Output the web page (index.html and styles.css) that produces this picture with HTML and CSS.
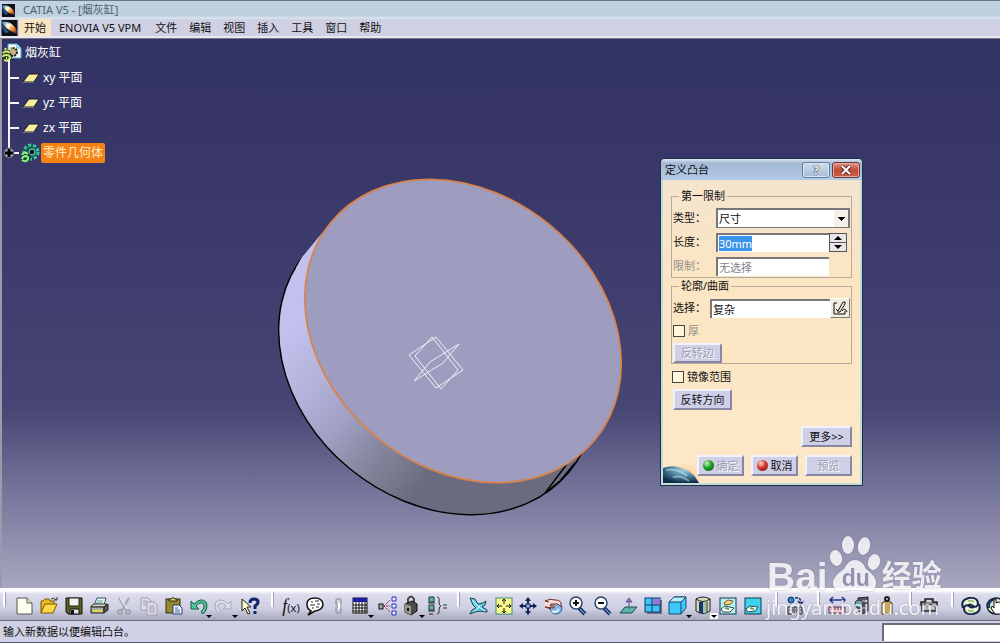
FILE: index.html
```html
<!DOCTYPE html>
<html lang="zh-CN">
<head>
    <meta charset="UTF-8">
    <meta name="viewport" content="width=device-width, initial-scale=1.0">
    <title>CATIA V5 - [烟灰缸]</title>
    <link rel="stylesheet" href="styles.css">
    <script defer src="script.js"></script>
</head>
<body>
    <!-- shared symbols -->
    <svg class="symbols" width="0" height="0" aria-hidden="true">
      <defs>
        <linearGradient id="comet" x1="0" y1="0" x2="1" y2="1">
          <stop offset="0" stop-color="#1b7fc0"/>
          <stop offset=".4" stop-color="#ffe9b8"/>
          <stop offset=".65" stop-color="#f08a3c"/>
          <stop offset="1" stop-color="#3a1a10"/>
        </linearGradient>
        <linearGradient id="side" x1="279" y1="250" x2="520" y2="470" gradientUnits="userSpaceOnUse">
          <stop offset=".19" stop-color="#c2c1ee"/>
          <stop offset=".36" stop-color="#b2b2da"/>
          <stop offset=".5" stop-color="#a0a0c4"/>
          <stop offset=".64" stop-color="#86869e"/>
          <stop offset=".81" stop-color="#6b6b80"/>
        </linearGradient>
        <radialGradient id="planetFill" cx=".6" cy=".2" r=".8">
          <stop offset="0" stop-color="#a8d0dc"/>
          <stop offset=".5" stop-color="#4c84a4"/>
          <stop offset="1" stop-color="#102c44"/>
        </radialGradient>
        <radialGradient id="glow" cx=".5" cy=".8" r=".5">
          <stop offset="0" stop-color="#f8a83c"/>
          <stop offset="1" stop-color="#fce6c4" stop-opacity="0"/>
        </radialGradient>
      </defs>
      <symbol id="logo" viewBox="0 0 16 16">
        <rect width="16" height="16" fill="#10101c"/>
        <path d="M0 2 Q8 0 14 8 L16 14 L11 12 Q4 9 0 2Z" fill="url(#comet)"/>
        <path d="M0 3 Q3 9 8 12 L4 13 Q1 10 0 3Z" fill="#1c5f9c"/>
        <path d="M4 3 L9 5 L7 9Z" fill="#fff"/>
      </symbol>
      <symbol id="plane" viewBox="0 0 18 10">
        <path d="M1 9 L7 1 H17 L12 9Z" fill="#f6ee9a" stroke="#17172c" stroke-width="1"/>
        <path d="M0 10 H12" stroke="#9fb0a0"/>
      </symbol>
      <symbol id="drop" viewBox="0 0 6 3"><path d="M0 0H6L3 3Z" fill="#000"/></symbol>
    </svg>

    <header class="titlebar">
      <svg class="logo-small"><use href="#logo"/></svg>
      <h1>CATIA V5 - [烟灰缸]</h1>
    </header>

    <nav class="menubar">
      <svg class="logo-menu"><use href="#logo"/></svg>
      <button type="button" class="active">开始</button>
      <button type="button" class="wide">ENOVIA V5 VPM</button>
      <button type="button">文件</button>
      <button type="button">编辑</button>
      <button type="button">视图</button>
      <button type="button">插入</button>
      <button type="button">工具</button>
      <button type="button">窗口</button>
      <button type="button">帮助</button>
    </nav>

    <main class="viewer">
      <svg class="model" viewBox="0 38 1000 550" preserveAspectRatio="xMinYMin meet">
        <!-- base disc, side wall, top face -->
        <path d="M305 254 A171 137 39.4 0 0 569 472 A171 137 39.4 0 0 305 254Z" fill="url(#side)" stroke="#000" stroke-width="1.4"/>
        <path d="M323 232 L302 257 L296 268 L330 300 L350 220Z" fill="url(#side)"/>
        <path d="M567 464 L545 493 L536 480 L550 460Z" fill="#6b6b80"/>
        <path d="M567 464 L545 493 M575 463 L560 481 L545 493" fill="none" stroke="#000" stroke-width="1.3"/>
        <ellipse cx="463" cy="331" rx="171" ry="137" transform="rotate(39.4 463 331)" fill="#9e9dc0" stroke="#d9824a" stroke-width="1.8"/>
        <g fill="none" stroke="#f0f0f4" stroke-width="1">
          <path d="M409 355 L436 337 L463 370 L436 388Z"/>
          <path d="M432 337 L458 370 L441 389 L415 356Z"/>
          <path d="M414 381 L430 362 L459 344 L443 363Z"/>
        </g>
      </svg>

      <div class="tree">
        <div class="tree-root">
          <svg width="20" height="20" viewBox="0 0 20 20">
            <path d="M6 1 H15 L19 5 V15 H6Z" fill="#fff" stroke="#4ab0c8"/>
            <path d="M15 1V5H19" fill="#bfe8f0" stroke="#4ab0c8"/>
            <circle cx="11" cy="9" r="4" fill="#c9b48c" stroke="#20201c" stroke-width="2" stroke-dasharray="2 1"/>
            <circle cx="5" cy="13" r="5" fill="#23421c"/>
            <path d="M1 10 Q4 7 8 10 M1 14 Q1 12 4 12 Q8 12 8 15 Q6 19 2 17 M4 15 H5 M3 7 L4 5 M7 7 L9 5" fill="none" stroke="#cfee70" stroke-width="2"/>
          </svg>
          <span>烟灰缸</span>
        </div>
        <ul>
          <li><svg width="18" height="10"><use href="#plane"/></svg><span>xy 平面</span></li>
          <li><svg width="18" height="10"><use href="#plane"/></svg><span>yz 平面</span></li>
          <li><svg width="18" height="10"><use href="#plane"/></svg><span>zx 平面</span></li>
          <li class="body-node">
            <svg class="expander" width="12" height="12" viewBox="0 0 12 12"><circle cx="6" cy="6" r="5" fill="#b4b4c4" stroke="#55556c"/><path d="M2 6H10M6 2V10" stroke="#000" stroke-width="3"/></svg>
            <svg width="20" height="20" viewBox="0 0 20 20">
              <circle cx="11" cy="9" r="7" fill="#1b5b50" stroke="#35c8a0" stroke-width="3" stroke-dasharray="3 2"/>
              <circle cx="12" cy="9" r="3" fill="#0b1c28" stroke="#7ee8d0"/>
              <circle cx="6" cy="14" r="5" fill="#17482c"/>
              <path d="M2 12 Q4 8 8 11 M2 16 Q3 13 6 13 Q9 14 8 16 Q6 20 2 17" fill="none" stroke="#92f088" stroke-width="2"/>
            </svg>
            <span class="selected">零件几何体</span>
          </li>
        </ul>
      </div>

      <section class="dialog" aria-labelledby="dialogTitle">
        <header>
          <h2 id="dialogTitle">定义凸台</h2>
          <button type="button" class="win help" aria-label="Help">?</button>
          <button type="button" class="win close" aria-label="Close">
            <svg width="12" height="10" viewBox="0 0 12 10"><path d="M2 1 L10 9 M10 1 L2 9" stroke="#5b2a2a" stroke-width="4"/><path d="M2 1 L10 9 M10 1 L2 9" stroke="#fff" stroke-width="2"/></svg>
          </button>
        </header>
        <form>
          <fieldset>
            <legend>第一限制</legend>
            <div class="row">
              <label for="type">类型：</label>
              <div class="select"><select id="type"><option>尺寸</option></select></div>
            </div>
            <div class="row">
              <label for="length">长度：</label>
              <input type="text" id="length" class="mid" value="30mm">
              <div class="spin">
                <button type="button" aria-label="+"><svg width="8" height="4"><path d="M0 4H8L4 0Z"/></svg></button>
                <button type="button" aria-label="-"><svg width="8" height="4"><path d="M0 0H8L4 4Z"/></svg></button>
              </div>
            </div>
            <div class="row disabled">
              <label for="limit">限制：</label>
              <input type="text" id="limit" class="mid" value="无选择" disabled>
            </div>
          </fieldset>

          <fieldset>
            <legend>轮廓/曲面</legend>
            <div class="row profile">
              <label for="profile">选择：</label>
              <input type="text" id="profile" value="复杂">
              <button type="button" class="sketch" aria-label="草图">
                <svg width="16" height="16" viewBox="0 0 16 16" fill="none" stroke="#111"><path d="M5 3H2V14H13V11M4 9L6 11L11 2L13 2L13 4L8 12L5 12M10 11Q13 7 15 12"/></svg>
              </button>
            </div>
            <div class="check disabled"><input type="checkbox" id="thick" disabled><label for="thick">厚</label></div>
            <button type="button" class="btn side" disabled>反转边</button>
          </fieldset>

          <div class="check mirror"><input type="checkbox" id="mirror"><label for="mirror">镜像范围</label></div>
          <button type="button" class="btn reverse">反转方向</button>
          <button type="button" class="btn more">更多&gt;&gt;</button>

          <div class="actions">
            <button type="button" class="btn" disabled><i class="ball green"></i>确定</button>
            <button type="button" class="btn"><i class="ball red"></i>取消</button>
            <button type="button" class="btn" disabled>预览</button>
          </div>
        </form>
        <svg class="planet" width="42" height="32" viewBox="0 0 42 32">
          <rect width="42" height="32" fill="url(#glow)"/>
          <path d="M0 17 Q10 13 22 18 Q31 22 36 32 H0Z" fill="url(#planetFill)"/>
          <path d="M3 19 Q14 17 24 25 M10 26 Q18 24 26 30" fill="none" stroke="#cfe6ea" stroke-opacity=".5" stroke-width="2"/>
        </svg>
      </section>
    </main>

    <div class="toolbar">
      <div class="group">
        <button type="button" aria-label="新建"><svg viewBox="0 0 24 24"><path d="M5 4H15L20 9V20H5Z" fill="#fffff0" stroke="#55554c"/><path d="M15 4V9H20" fill="#e8e8d0" stroke="#55554c"/></svg></button>
        <button type="button" aria-label="打开"><svg viewBox="0 0 24 24"><path d="M4 19V7H6L8 5H12L13 7H17V10" fill="#e8b820" stroke="#7c5a00"/><path d="M4 19L8 10H20L16 19Z" fill="#fcd848" stroke="#7c5a00"/><path d="M14 5Q17 3 19 6M17 6H20V3" fill="none" stroke="#333"/></svg></button>
        <button type="button" aria-label="保存"><svg viewBox="0 0 24 24"><path d="M4 4H20V20H6L4 18Z" fill="#5c6420" stroke="#111"/><rect x="7" y="4" width="10" height="8" fill="#f4f4e8" stroke="#222"/><path d="M8 15H17V20H8Z" fill="#e4e4e4" stroke="#111"/><rect x="9" y="16" width="3" height="4" fill="#111"/></svg></button>
        <button type="button" aria-label="打印"><svg viewBox="0 0 24 24"><path d="M7 11L10 4H19L17 11" fill="#e6f6ee" stroke="#35585c"/><path d="M10 7H16M9 9H15" stroke="#63a090"/><path d="M4 12L7 10H20L17 13H4Z" fill="#d8dcd0" stroke="#333"/><path d="M4 13H17V19H4Z" fill="#acb0a4" stroke="#222"/><path d="M17 13L21 10V16L17 19Z" fill="#5c5c50" stroke="#222"/><path d="M6 17H15" stroke="#e8d848" stroke-width="2"/></svg></button>
        <button type="button" aria-label="剪切" disabled><svg viewBox="0 0 24 24" fill="none" stroke="#a4a4b0" stroke-width="2"><path d="M7 4L14 16M17 4L10 16"/><circle cx="8" cy="18" r="2"/><circle cx="16" cy="18" r="2"/><path d="M8 4L15 15" stroke="#fff" stroke-width="1"/></svg></button>
        <button type="button" aria-label="复制" disabled><svg viewBox="0 0 24 24" fill="#dedeea" stroke="#a0a0ac"><path d="M4 4H11L14 7V16H4Z"/><path d="M10 8H17L20 11V21H10Z"/><path d="M6 7H10M6 9H9M6 11H9M12 12H17M12 14H18M12 16H18M12 18H18"/></svg></button>
        <button type="button" aria-label="粘贴"><svg viewBox="0 0 24 24"><rect x="4" y="5" width="14" height="14" fill="#98882c" stroke="#35300c"/><path d="M7 7V5H9Q11 2 13 5H15V7Z" fill="#e8d86c" stroke="#222"/><path d="M11 11H17L20 14V20H11Z" fill="#f4f4ff" stroke="#223a70"/><path d="M13 14H16M13 16H18M13 18H18" stroke="#4464a0"/></svg></button>
        <button type="button" aria-label="撤消"><svg viewBox="0 0 24 24"><path d="M4 7V15H12L9 12Q15 6 17 11Q18 14 14 18L16 20Q22 14 19 8Q14 3 7 10Z" fill="#52c49c" stroke="#106044"/><use href="#drop" x="19" y="21" width="6" height="3"/></svg></button>
        <button type="button" aria-label="重做" disabled><svg viewBox="0 0 24 24"><path d="M19 7V15H11L14 12Q9 7 6 11Q5 14 9 18L7 20Q1 14 4 8Q9 3 16 10Z" fill="#dcdce8" stroke="#a8a8b4"/><use href="#drop" x="20" y="21" width="6" height="3"/></svg></button>
        <button type="button" aria-label="这是什么"><svg viewBox="0 0 24 24"><path d="M5 5L5 17L8 14L11 20L13 19L10 13H14Z" fill="#fff8c8" stroke="#222"/><path d="M13 9Q13 5 17 5Q21 5 21 8Q21 10 18 12V15M18 17V20" fill="none" stroke="#14246c" stroke-width="3"/></svg></button>
      </div>

      <div class="group tight">
        <button type="button" class="fx">f<small>(x)</small></button>
        <button type="button" aria-label="注释"><svg viewBox="0 0 24 24"><path d="M8 17L5 21L12 17Q20 16 20 10Q19 4 12 4Q4 4 4 10Q4 15 8 17Z" fill="#fff" stroke="#111" stroke-width="1.5"/><path d="M8 8H10M12 7H16M7 11H12M14 10H17M9 14H11M13 13H16" stroke="#333"/></svg></button>
        <button type="button" aria-label="链接" disabled><svg viewBox="0 0 24 24" fill="none" stroke="#a8a8b4" stroke-width="2"><rect x="9" y="5" width="5" height="6" rx="2"/><rect x="9" y="13" width="5" height="6" rx="2"/><path d="M12 9V15" stroke="#fff"/></svg></button>
        <button type="button" aria-label="设计表"><svg viewBox="0 0 24 24"><rect x="2" y="4" width="14" height="15" fill="#fff" stroke="#111"/><rect x="2" y="4" width="14" height="4" fill="#1c1ca4"/><path d="M2 11H16M2 14H16M2 17H16M5 8V19M8 8V19M11 8V19M14 8V19" stroke="#111"/><use href="#drop" x="17" y="21" width="6" height="3"/></svg></button>
        <button type="button" aria-label="关系"><svg viewBox="0 0 24 24" fill="none"><rect x="4" y="10" width="4" height="5" fill="#8cb8a8" stroke="#111"/><path d="M8 12H15M9 12L15 6M9 12L15 18" stroke="#982850" stroke-dasharray="2 1"/><path d="M17 3H21V7H17ZM17 10H21V14H17ZM17 17H21V21H17Z" fill="#e8e8ff" stroke="#2434b0"/></svg></button>
        <button type="button" aria-label="锁"><svg viewBox="0 0 24 24"><path d="M9 12V5Q12 0 15 5V12" fill="none" stroke="#444" stroke-width="2"/><path d="M6 10L13 7L18 10V17L12 21L6 18Z" fill="#4c4c4c" stroke="#111"/><path d="M6 10L12 12V21L6 18Z" fill="#96968c"/><path d="M9 14V17" stroke="#111" stroke-width="2"/><use href="#drop" x="20" y="21" width="6" height="3"/></svg></button>
        <button type="button" aria-label="等效尺寸"><svg viewBox="0 0 24 24" fill="none"><path d="M6 3H11V8H6ZM6 11H11V16H6Z" fill="#66b09c" stroke="#163c3c"/><path d="M5 9H12M5 17H12M6 20H10" stroke="#222"/><path d="M14 3Q17 3 16 8Q16 12 18 12Q16 12 16 16Q17 20 14 20" stroke="#333"/><path d="M20 11H24M20 14H24" stroke="#333"/></svg></button>
      </div>

      <div class="group">
        <button type="button" aria-label="飞行"><svg viewBox="0 0 24 24"><path d="M4 4L9 5L12 10L17 9L20 7L19 11L16 13L21 16V18L14 17L9 18L4 20L6 16L10 14L7 11L4 4Z" fill="#63cce0" stroke="#17485c"/><path d="M6 6L13 13L19 17M8 17L14 12" fill="none" stroke="#d8f8ff"/></svg></button>
        <button type="button" aria-label="全部适应"><svg viewBox="0 0 24 24"><rect x="5" y="4" width="16" height="16" fill="#fbfb8c" stroke="#3c8c74"/><path d="M13 5V10M13 14V19M6 12H11M15 12H20M11 7L13 5L15 7M11 17L13 19L15 17M8 10L6 12L8 14M18 10L20 12L18 14" fill="none" stroke="#111"/></svg></button>
        <button type="button" aria-label="平移"><svg viewBox="0 0 24 24"><path d="M12 4V20M4 12H20" stroke="#14245c" stroke-width="2"/><path d="M12 3L15 7H9ZM12 21L15 17H9ZM3 12L7 9V15ZM21 12L17 9V15Z" fill="#14245c"/><rect x="10" y="10" width="4" height="4" fill="#98c0dc" stroke="#14245c"/></svg></button>
        <button type="button" aria-label="旋转"><svg viewBox="0 0 24 24"><circle cx="15" cy="14" r="6" fill="#84b8e4" stroke="#285c98"/><path d="M4 7Q9 4 14 6Q20 6 20 10V13L17 10H10L9 12L13 12L13 14L4 13" fill="#fcdcd0" stroke="#702c28"/><path d="M4 7L8 8M4 13L10 15" stroke="#702c28"/><path d="M11 17Q15 20 18 15" fill="none" stroke="#e4f4ff" stroke-width="2"/></svg></button>
        <button type="button" aria-label="放大"><svg viewBox="0 0 24 24"><path d="M13 14L19 20" stroke="#1c3870" stroke-width="4"/><path d="M14 15L19 20" stroke="#8cc0e4" stroke-width="1"/><circle cx="10" cy="9" r="6" fill="#fff" stroke="#2c4868" stroke-width="1.5"/><path d="M7 9H13M10 6V12" stroke="#111" stroke-width="2"/></svg></button>
        <button type="button" aria-label="缩小"><svg viewBox="0 0 24 24"><path d="M13 14L19 20" stroke="#1c3870" stroke-width="4"/><path d="M14 15L19 20" stroke="#8cc0e4" stroke-width="1"/><circle cx="10" cy="9" r="6" fill="#fff" stroke="#2c4868" stroke-width="1.5"/><path d="M7 9H13" stroke="#111" stroke-width="2"/></svg></button>
        <button type="button" aria-label="法线视图"><svg viewBox="0 0 24 24"><path d="M4 19L9 13H21L16 19Z" fill="#5cb4ac" stroke="#1c4c50"/><path d="M13 15V6M10 8L13 4L16 8Z" fill="#a48cc8" stroke="#6c4c94"/></svg></button>
        <button type="button" aria-label="多视图"><svg viewBox="0 0 24 24"><rect x="6" y="6" width="15" height="14" fill="#6c6c84"/><rect x="4" y="4" width="15" height="14" fill="#3cc8f4" stroke="#14346c"/><rect x="12" y="5" width="7" height="6" fill="#9c74dc"/><path d="M11 4V18M4 11H19" stroke="#14346c"/></svg></button>
        <button type="button" aria-label="等轴测视图"><svg viewBox="0 0 24 24"><path d="M3 8L8 3H20V14L15 20H3Z" fill="#3cc8fc" stroke="#14486c"/><path d="M3 8L8 3H20L15 8Z" fill="#b4ecfc" stroke="#14486c"/><path d="M15 8V20" stroke="#14486c"/><use href="#drop" x="20" y="21" width="6" height="3"/></svg></button>
        <button type="button" aria-label="着色"><svg viewBox="0 0 24 24"><rect x="19" y="19" width="8" height="6" fill="#fff"/><path d="M5 5V17Q12 22 19 17V5Q12 1 5 5Z" fill="#d8dcb4" stroke="#222"/><path d="M8 8V19H12V8Z" fill="#1c3470"/><path d="M12 8V19H15V8Z" fill="#98c8ac"/><path d="M5 5Q12 10 19 5M16 8V18" fill="none" stroke="#222"/><use href="#drop" x="20" y="21" width="6" height="3"/></svg></button>
        <button type="button" aria-label="隐藏/显示"><svg viewBox="0 0 24 24"><rect x="4" y="4" width="16" height="16" fill="#b8f0f0" stroke="#14384c"/><path d="M8 9L12 6L17 7L15 10L9 11Z" fill="#fcdc6c" stroke="#70582c"/><path d="M5 15L9 12L18 14L14 18L7 18Z" fill="#fff" stroke="#284c50"/><path d="M9 14L13 15" stroke="#58a070" stroke-width="2"/></svg></button>
        <button type="button" aria-label="交换可视空间"><svg viewBox="0 0 24 24"><rect x="4" y="4" width="16" height="16" fill="#3cd4ec" stroke="#14384c"/><path d="M5 15L9 12L17 13L14 17L7 18Z" fill="#fff" stroke="#284c50"/><path d="M9 14L13 15" stroke="#58a070" stroke-width="2"/></svg></button>
      </div>

      <div class="group">
        <button type="button" aria-label="转换"><svg viewBox="0 0 24 24" fill="none"><circle cx="8" cy="6" r="3" fill="#2888c0" stroke="#142c60"/><path d="M12 4Q18 3 18 9M15 7L18 10L21 7" stroke="#142c60" stroke-width="1.5" stroke-dasharray="3 1"/><path d="M5 13H9V20H5ZM11 13H14V20H11ZM16 13H19V20H16ZM6 16H8M12 16H13M17 16H18" stroke="#222"/></svg></button>
      </div>
      <div class="group">
        <button type="button" aria-label="测量间距"><svg viewBox="0 0 24 24" fill="none"><path d="M5 6H20M8 3L5 6L8 9M17 3L20 6L17 9" stroke="#1c348c" stroke-width="1.5"/><path d="M4 13H20V19H4ZM7 13V16M10 13V16M13 13V16M16 13V16" fill="#f4c8d0" stroke="#5c3048"/></svg></button>
        <button type="button" aria-label="测量项"><svg viewBox="0 0 24 24"><path d="M8 4L18 3V17L12 20L8 16Z" fill="#54545c" stroke="#222"/><circle cx="9" cy="10" r="4" fill="#74a8b0" stroke="#333"/><path d="M12 7H16M12 14H16" stroke="#c8c8d0"/></svg></button>
        <button type="button" aria-label="测量惯量"><svg viewBox="0 0 24 24"><path d="M7 9Q12 5 17 9V20H7Z" fill="#c8a85c" stroke="#4c3c1c"/><path d="M9 9V19" stroke="#fbe8a8" stroke-width="2"/><circle cx="12" cy="5" r="2" fill="#ccc" stroke="#222" stroke-width="2"/></svg></button>
      </div>
      <div class="group">
        <button type="button" aria-label="工具"><svg viewBox="0 0 24 24"><path d="M4 8H8V5H16V8H20V11H4Z" fill="#8c8c98" stroke="#222" stroke-width="1.5"/><path d="M5 11V17H19V11Z" fill="#a8a8b4" stroke="#222" stroke-width="1.5"/><path d="M10 7H14M7 14H9M11 14H13M15 14H17" stroke="#eee" stroke-width="1.5"/></svg></button>
      </div>
      <div class="group">
        <button type="button" aria-label="更新"><svg viewBox="0 0 24 24"><ellipse cx="12" cy="12" rx="9" ry="8" fill="#f4f8e0"/><path d="M4 14Q1 6 10 4Q19 3 19 10Q18 14 14 12Q11 9 8 12M20 10Q23 18 14 20Q5 21 5 14Q6 10 10 12Q13 15 16 12" fill="none" stroke="#14284c" stroke-width="2"/><path d="M9 7Q13 6 15 8M15 17Q11 18 9 16" fill="none" stroke="#96c880" stroke-width="2"/></svg></button>
        <button type="button" aria-label="手动更新"><svg viewBox="0 0 24 24"><ellipse cx="12" cy="12" rx="9" ry="8" fill="#dcecc8" stroke="#14203c" stroke-width="1.5"/><path d="M5 14Q4 6 12 5" fill="none" stroke="#14386c" stroke-width="2"/><path d="M10 5V14L8 12L7 14L11 20H18V9L15 8L12 9V5Z" fill="#fff" stroke="#111"/></svg></button>
      </div>
    </div>

    <footer class="statusbar">
      <p>输入新数据以便编辑凸台。</p>
      <input type="text" aria-label="命令">
    </footer>

    <div class="watermark" aria-hidden="true">
      <div class="brand">
        <span>Bai</span>
        <div class="paw">
          <svg viewBox="0 0 54 58">
            <g fill="#fff">
              <ellipse cx="8" cy="22" rx="6" ry="8" transform="rotate(-15 8 22)"/>
              <ellipse cx="20" cy="9" rx="6" ry="9"/>
              <ellipse cx="36" cy="10" rx="6" ry="9" transform="rotate(12 36 10)"/>
              <ellipse cx="46" cy="26" rx="6" ry="8" transform="rotate(15 46 26)"/>
              <path d="M27 24 Q34 24 38 33 Q49 41 48 48 Q47 57 38 55 Q27 53 17 55 Q6 57 5 48 Q4 41 16 33 Q20 24 27 24Z"/>
            </g>
          </svg>
          <b>du</b>
        </div>
        <span class="cjk">经验</span>
      </div>
      <div class="site">jingyan.baidu.com</div>
    </div>
</body>
</html>
```
FILE: styles.css
```css
* {
    margin: 0;
    padding: 0;
    box-sizing: border-box;
}

body {
    position: relative;
    display: flex;
    flex-direction: column;
    min-height: 100vh;
    overflow: hidden;
    background-color: #d0d0e6;
    color: #111;
    font-family: "Noto Sans", "Noto Sans CJK SC", sans-serif;
    font-size: 11px;
    line-height: 14px;
}

button, input, select {
    font: inherit;
    color: inherit;
}

button {
    border: none;
    background: none;
}

svg {
    display: block;
}

.symbols {
    position: absolute;
}

/* TITLE + MENU */
.titlebar {
    display: flex;
    align-items: center;
    gap: 8px;
    height: 19px;
    padding-left: 2px;
    border-top: 1px solid #66788a;
    background: linear-gradient(#c2d2e0, #bdcfdf 80%, #dfe7ee);
    color: #50606c;
}

.titlebar h1 {
    font-size: 11px;
    font-weight: normal;
}

.logo-small {
    width: 13px;
    height: 13px;
}

.menubar {
    display: flex;
    height: 19px;
    border-bottom: 2px solid #e8e8f2;
    background-color: #d0d0e4;
}

.logo-menu {
    width: 17px;
    height: 16px;
    margin: 1px 1px 0;
}

.menubar button {
    padding: 0 6px;
}

.menubar .active {
    padding: 0 5px;
    background-color: #f9e4c2;
}

.menubar .wide {
    padding: 0 8px;
}

/* 3D VIEW */
.viewer {
    position: relative;
    flex: 1;
    min-height: 550px;
    border-left: 2px solid #9a9aac;
    border-top: 1px solid #77778c;
    background: linear-gradient(#333264, #3c3b6c 38%, #464573 67%, #74739a 82%, #a9a8c0);
}

.model {
    position: absolute;
    top: -1px;
    left: -2px;
    width: 1000px;
    height: 550px;
}

.tree {
    position: relative;
    width: 130px;
    padding-top: 1px;
    color: #fff;
    font-size: 12px;
}

.tree-root, .tree li {
    display: flex;
    align-items: center;
    gap: 3px;
    height: 25px;
}

.tree ul {
    position: relative;
    list-style: none;
    padding-left: 6px;
}

.tree ul::before {
    content: "";
    position: absolute;
    left: 6px;
    top: -5px;
    bottom: 12px;
    width: 2px;
    background-color: #f4f4fa;
}

.tree li::before {
    content: "";
    width: 11px;
    height: 2px;
    background-color: #f4f4fa;
}

.tree .expander {
    position: absolute;
    left: 1px;
}

.tree .body-node {
    gap: 1px;
}

.tree .selected {
    padding: 2px;
    border-radius: 2px;
    background-color: #f58216;
    color: #ffeec4;
    line-height: 16px;
}

/* DIALOG */
.dialog {
    position: absolute;
    top: 119px;
    left: 658px;
    width: 203px;
    border: 1px solid #1d3048;
    border-radius: 5px 5px 0 0;
    background: linear-gradient(#f4e4d0, #fbe5c2 40%, #fce8c8);
    box-shadow: inset 0 0 0 2px #c4dcdc;
}

.dialog header {
    display: flex;
    align-items: center;
    gap: 2px;
    height: 21px;
    padding: 0 2px 0 4px;
    border-radius: 4px 4px 0 0;
    background: linear-gradient(#dce8f4, #a4b8d4 20%, #b2cbe6);
}

.dialog h2 {
    flex: 1;
    font-size: 11px;
    font-weight: normal;
}

.win {
    display: flex;
    align-items: center;
    justify-content: center;
    width: 28px;
    height: 16px;
    border: 1px solid #66809c;
    border-radius: 3px;
    background: linear-gradient(#cfdfee, #a5bdd6);
    box-shadow: inset 0 0 0 1px #d4e4f2;
    color: #fff;
    font-weight: bold;
    text-shadow: 0 0 1px #222, 0 0 2px #222;
}

.win.close {
    border-color: #70383c;
    background: linear-gradient(#e09c8c, #c44838 50%, #cc5c44);
    box-shadow: inset 0 0 0 1px #e4a898;
}

.dialog form {
    display: flex;
    flex-direction: column;
    align-items: flex-start;
    padding: 9px 10px;
}

.dialog fieldset {
    display: flex;
    flex-direction: column;
    gap: 4px;
    width: 100%;
    min-width: 0;
    padding: 5px 1px 1px;
    border: 1px solid #b4ab9c;
}

.dialog fieldset + fieldset {
    margin-top: 1px;
    padding-bottom: 0;
}

.dialog legend {
    margin-left: 6px;
    padding: 0 2px;
}

.row {
    display: flex;
    align-items: center;
    height: 20px;
}

.row label {
    width: 43px;
    white-space: nowrap;
}

.row.profile label {
    width: 37px;
}

.row input, .select select {
    height: 19px;
    padding: 0 1px;
    border: solid #77777c;
    border-width: 2px 0 0 2px;
    border-radius: 0;
    background-color: #fff;
    outline: none;
}

.row input.mid {
    width: 113px;
}

.row.profile input {
    flex: 1;
    width: 0;
}

.row input::selection {
    background-color: #3b96ea;
    color: #fff;
}

.row.disabled, .check.disabled {
    color: #96908a;
}

.row input:disabled {
    color: #85858a;
}

.select {
    position: relative;
    flex: 1;
}

.select select {
    display: block;
    width: 100%;
    height: 20px;
    border-width: 2px 1px 1px 2px;
    appearance: none;
}

/* arrow button of the combo */
.select::after {
    content: "";
    position: absolute;
    right: 1px;
    top: 2px;
    width: 14px;
    height: 17px;
    border: 1px solid #777;
    border-width: 0 1px 1px 0;
    background: linear-gradient(#000, #000) 4px 7px / 7px 1px no-repeat,
                linear-gradient(#000, #000) 5px 8px / 5px 1px no-repeat,
                linear-gradient(#000, #000) 6px 9px / 3px 1px no-repeat,
                linear-gradient(#000, #000) 7px 10px / 1px 1px no-repeat #f4f0ea;
    pointer-events: none;
}

.spin {
    display: flex;
    flex-direction: column;
    width: 18px;
    height: 19px;
    border: 1px solid #555;
}

.spin button {
    display: flex;
    flex: 1;
    align-items: center;
    justify-content: center;
    min-height: 0;
    background-color: #e8e6e6;
}

.spin button + button {
    border-top: 1px solid #555;
}

.sketch {
    width: 20px;
    height: 20px;
    padding: 1px;
    border: 1px solid #fff;
    border-right-color: #777;
    border-bottom-color: #777;
    background-color: #f3ecdf;
}

.check {
    display: flex;
    align-items: center;
    gap: 3px;
    height: 17px;
}

.check input {
    appearance: none;
    width: 12px;
    height: 12px;
    border: 1px solid #444;
    background-color: #fff6dc;
}

.mirror {
    margin-top: 4px;
    margin-left: 1px;
}

.btn {
    display: flex;
    align-items: center;
    justify-content: center;
    gap: 3px;
    height: 21px;
    border: 2px solid;
    border-color: #f2f2fa #8888a4 #8888a4 #f2f2fa;
    background-color: #cfcfe8;
    white-space: nowrap;
}

.btn:disabled {
    color: #9c9cac;
    text-shadow: 1px 1px 0 #fff;
}

.btn.side {
    width: 49px;
    height: 20px;
}

.btn.reverse {
    width: 59px;
    margin: 4px 0 0 2px;
}

.btn.more {
    width: 51px;
    margin-top: 16px;
    align-self: flex-end;
}

.actions {
    position: relative;
    z-index: 1;
    display: flex;
    align-self: flex-end;
    gap: 7px;
    margin-top: 8px;
}

.actions .btn {
    width: 47px;
}

.ball {
    width: 11px;
    height: 11px;
    border-radius: 50%;
}

.ball.green {
    background: radial-gradient(circle at 35% 30%, #c8f8b8, #1c9c24 45%, #0c5014);
}

.ball.red {
    background: radial-gradient(circle at 35% 30%, #ffd8d0, #d43430 45%, #701414);
}

.planet {
    position: absolute;
    left: 2px;
    bottom: 2px;
}

/* TOOLBAR */
.toolbar {
    display: flex;
    gap: 10px;
    height: 33px;
    padding: 6px 0 0 3px;
    overflow: hidden;
    border-bottom: 1px solid #6c6c7c;
    background: linear-gradient(#fff 0, #fbfbfe 9%, #dcdcec 20%, #cfcfe4 65%, #a9a9bb);
}

.group {
    display: flex;
    flex-shrink: 0;
    gap: 1px;
}

.group.tight {
    gap: 0;
}

.group::before {
    content: "";
    width: 2px;
    height: 15px;
    margin: -2px 5px 0 0;
    border-right: 1px solid #a0a0b0;
    background-color: #fff;
}

.group:nth-child(n+4)::before {
    margin-right: 4px;
}

.toolbar button {
    width: 24px;
    height: 24px;
}

.toolbar svg {
    width: 24px;
    height: 24px;
    overflow: visible;
}

.toolbar .fx {
    font: italic 18px/24px "Liberation Serif", serif;
    white-space: nowrap;
}

.fx small {
    font: 11px "Noto Sans", sans-serif;
}

/* STATUS */
.statusbar {
    display: flex;
    align-items: center;
    justify-content: space-between;
    height: 22px;
    padding-left: 3px;
    border-bottom: 1px solid #50586c;
    background-color: #d0d0e6;
}

.statusbar input {
    width: 118px;
    height: 18px;
    border: solid #6c6c78;
    border-width: 2px 0 0 2px;
    background-color: #fff;
}

/* WATERMARK */
.watermark {
    position: absolute;
    right: 54px;
    bottom: 22px;
    width: 180px;
    color: #fff;
    opacity: .8;
    pointer-events: none;
    text-shadow: 0 0 2px rgba(90, 90, 120, .6);
}

.brand {
    display: flex;
    align-items: flex-end;
    height: 58px;
    padding-left: 1px;
    font: bold 39px/44px "Liberation Sans", sans-serif;
}

.brand > span {
    height: 39px;
}

.paw {
    width: 54px;
    height: 58px;
    position: relative;
}

.paw svg {
    filter: drop-shadow(0 0 1px rgba(90, 90, 120, .6));
}

.paw b {
    position: absolute;
    left: 14px;
    bottom: 4px;
    color: #8e8eae;
    font: bold 23px/24px "Liberation Sans", sans-serif;
    text-shadow: none;
}

.brand .cjk {
    font: bold 30px/36px "Noto Sans CJK SC", sans-serif;
}

.site {
    height: 27px;
    font: 20px/27px "Noto Sans", sans-serif;
}
```
FILE: script.js
```js
// the length field opens with its value selected
const lengthField = document.getElementById("length");
lengthField.focus();
lengthField.select();
```
